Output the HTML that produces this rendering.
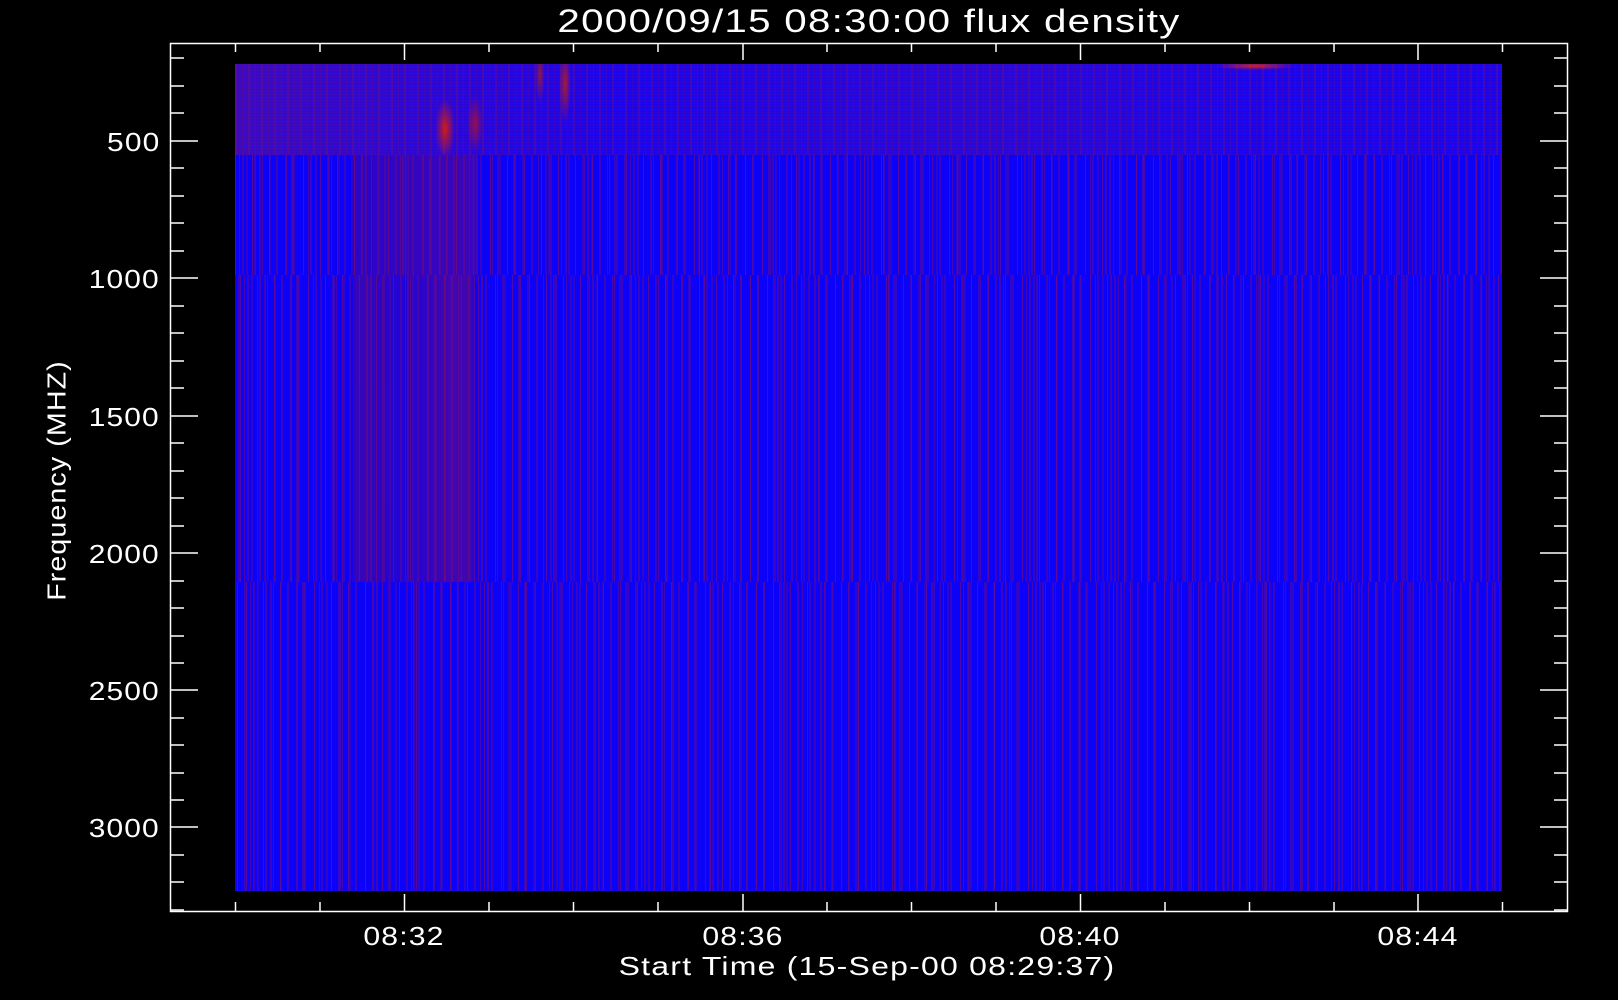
<!DOCTYPE html>
<html><head><meta charset="utf-8"><style>
html,body{margin:0;padding:0;background:#000;}
body{width:1618px;height:1000px;position:relative;overflow:hidden;font-family:"Liberation Sans",sans-serif;color:#fff;}
.t{position:absolute;white-space:nowrap;font-weight:normal;}
.img{position:absolute;left:235px;width:1267px;}
#a{top:64px;height:91px;background:
 radial-gradient(ellipse 10px 30px at 210px 65px,rgba(220,30,0,.9),transparent),
 radial-gradient(ellipse 8px 28px at 240px 60px,rgba(190,20,20,.7),transparent),
 radial-gradient(ellipse 6px 40px at 330px 20px,rgba(200,30,0,.8),transparent),
 radial-gradient(ellipse 5px 30px at 305px 10px,rgba(190,30,0,.7),transparent),
 radial-gradient(ellipse 40px 4px at 1020px 2px,rgba(230,40,0,.9),transparent),
 linear-gradient(90deg,rgba(120,20,110,.35),rgba(0,0,255,0) 30%,rgba(100,20,130,.2) 60%,rgba(0,0,255,0) 80%),
 repeating-linear-gradient(90deg,rgba(110,15,120,.4) 0 2px,transparent 2px 7px,rgba(90,10,140,.3) 7px 8px,transparent 8px 13px),
 repeating-linear-gradient(0deg,rgba(90,10,150,.25) 0 1px,transparent 1px 3px),
 #1a04f0;}
.s{background:
 repeating-linear-gradient(90deg,rgba(110,10,130,.7) 0 1px,transparent 1px 7px,rgba(100,10,140,.5) 7px 9px,transparent 9px 17px),
 repeating-linear-gradient(90deg,transparent 0 4px,rgba(100,10,140,.6) 4px 5px,transparent 5px 11px,rgba(80,10,160,.5) 11px 13px,transparent 13px 23px),
 repeating-linear-gradient(90deg,transparent 0 19px,rgba(90,10,150,.6) 19px 21px,transparent 21px 37px),
 #0c02f8;}
#b{top:155px;height:120px;}
#c{top:275px;height:307px;}
#d{top:582px;height:309px;}
#r{position:absolute;left:351px;top:275px;width:125px;height:307px;background:
 linear-gradient(90deg,transparent 0,rgba(110,10,100,.45) 5px,rgba(110,10,100,.2) 55px,rgba(130,10,90,.45) 100px,rgba(120,10,100,.5) 120px,transparent);}
#r2{position:absolute;left:351px;top:155px;width:125px;height:120px;background:linear-gradient(90deg,rgba(110,10,100,.3),rgba(130,10,90,.4));}
.yl{right:1458px;font-size:26px;letter-spacing:1px;transform:scaleX(1.15);transform-origin:right center;}
.xl{width:100px;text-align:center;top:921px;font-size:26px;letter-spacing:1px;transform:scaleX(1.16);}
</style></head><body>
<div class="img" id="a"></div>
<div class="img s" id="b"></div>
<div class="img s" id="c" style="background-position:5px 0"></div>
<div class="img s" id="d" style="background-position:11px 0"></div>
<div id="r"></div><div id="r2"></div>
<svg width="1618" height="1000" style="position:absolute;left:0;top:0" stroke="#fff" stroke-width="1.5" fill="none">
<rect x="170.5" y="43.5" width="1397" height="868"/>
<path d="M170 58h14M170 86h14M170 113h14M170 141h28M170 168h14M170 196h14M170 223h14M170 251h14M170 278h28M170 306h14M170 333h14M170 361h14M170 388h14M170 416h28M170 443h14M170 471h14M170 498h14M170 526h14M170 553h28M170 581h14M170 608h14M170 636h14M170 663h14M170 690h28M170 718h14M170 745h14M170 773h14M170 800h14M170 827h28M170 855h14M170 882h14M170 910h14"/>
<path transform="translate(1738,0) scale(-1,1)" d="M170 58h14M170 86h14M170 113h14M170 141h28M170 168h14M170 196h14M170 223h14M170 251h14M170 278h28M170 306h14M170 333h14M170 361h14M170 388h14M170 416h28M170 443h14M170 471h14M170 498h14M170 526h14M170 553h28M170 581h14M170 608h14M170 636h14M170 663h14M170 690h28M170 718h14M170 745h14M170 773h14M170 800h14M170 827h28M170 855h14M170 882h14M170 910h14"/>
<path d="M235.5 911v-9M320 911v-9M404.5 911v-17M489 911v-9M573.5 911v-9M658 911v-9M743 911v-17M827 911v-9M911.5 911v-9M996 911v-9M1080.5 911v-17M1165 911v-9M1249.5 911v-9M1334 911v-9M1418 911v-17M1502.5 911v-9"/>
<path d="M235.5 43v9M320 43v9M404.5 43v17M489 43v9M573.5 43v9M658 43v9M743 43v17M827 43v9M911.5 43v9M996 43v9M1080.5 43v17M1165 43v9M1249.5 43v9M1334 43v9M1418 43v17M1502.5 43v9"/>
</svg>
<div class="t" style="left:569px;width:600px;text-align:center;top:3px;font-size:32px;letter-spacing:1px;transform:scaleX(1.26)">2000/09/15 08:30:00 flux density</div>
<div class="t yl" style="top:127px">500</div>
<div class="t yl" style="top:264px">1000</div>
<div class="t yl" style="top:402px">1500</div>
<div class="t yl" style="top:539px">2000</div>
<div class="t yl" style="top:676px">2500</div>
<div class="t yl" style="top:813px">3000</div>
<div class="t xl" style="left:354px">08:32</div>
<div class="t xl" style="left:693px">08:36</div>
<div class="t xl" style="left:1030px">08:40</div>
<div class="t xl" style="left:1368px">08:44</div>
<div class="t" style="left:567px;width:600px;text-align:center;top:951px;font-size:26px;letter-spacing:1px;transform:scaleX(1.23)">Start Time (15-Sep-00 08:29:37)</div>
<div class="t" style="left:-93px;width:300px;text-align:center;top:465px;font-size:26px;letter-spacing:1px;transform:rotate(-90deg) scaleX(1.1)">Frequency (MHZ)</div>
</body></html>
